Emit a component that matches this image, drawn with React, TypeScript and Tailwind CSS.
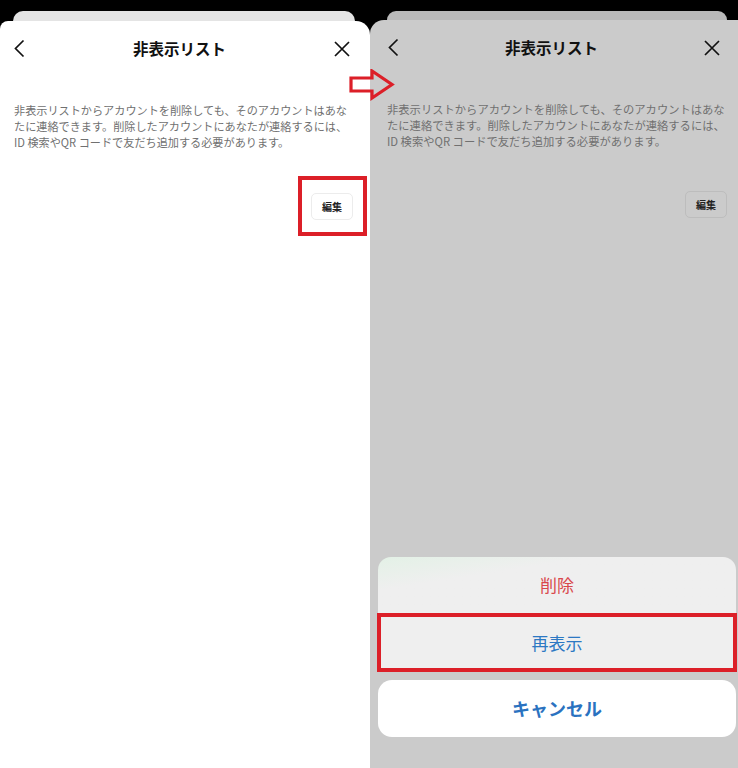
import React from 'react';

// 非表示リスト: 編集ボタン → アクションシート(削除/再表示/キャンセル) の説明用スクリーンショット
const Chevron: React.FC = () => (
    <svg width="12" height="19" viewBox="0 0 12 19">
        <path d="M10.5 1.5 L2.5 9.5 L10.5 17.5" fill="none" stroke="#111" strokeWidth="1.7" />
    </svg>
);

const Close: React.FC = () => (
    <svg width="16" height="16" viewBox="0 0 16 16">
        <path d="M1 1 L15 15 M15 1 L1 15" fill="none" stroke="#111" strokeWidth="1.7" />
    </svg>
);

const Header: React.FC<{ pl: string; pr: string }> = ({ pl, pr }) => (
    <div className={`h-[55px] flex items-center justify-between ${pl} ${pr}`}>
        <Chevron />
        <h1 className="text-[15.5px] font-bold text-[#111]">非表示リスト</h1>
        <Close />
    </div>
);

const Description: React.FC<{ pl: string; size: string }> = ({ pl, size }) => (
    <div className={`pt-[26px] ${pl} ${size} leading-[16px] text-[#707070] whitespace-nowrap`}>
        <p>非表示リストからアカウントを削除しても、そのアカウントはあな</p>
        <p>たに連絡できます。削除したアカウントにあなたが連絡するには、</p>
        <p>ID 検索やQR コードで友だち追加する必要があります。</p>
    </div>
);

const EditButton: React.FC<{ dim?: boolean }> = ({ dim }) => (
    <button
        className={`w-[42px] h-[27px] rounded-[5px] border text-[10px] font-bold text-[#222] ${dim ? 'border-[#bdbdbd] bg-[#cbcbcb]' : 'border-[#ececec] bg-white'}`}
    >
        編集
    </button>
);

const App: React.FC = () => {
    return (
        <div
            className="relative w-[738px] h-[768px] flex bg-black overflow-hidden"
            style={{ fontFamily: '"Noto Sans CJK JP", "Noto Sans", sans-serif' }}
        >
            {/* 左: 非表示リスト */}
            <div className="w-[370px] flex flex-col">
                <div className="h-[11px]" />
                <div className="ml-[13px] mr-[15px] h-[10px] rounded-t-[10px] bg-[#e4e4e4]" />
                <div className="flex-1 bg-white rounded-tr-[14px] rounded-tl-[8px]">
                    <Header pl="pl-[13px]" pr="pr-[20px]" />
                    <Description pl="pl-[14px]" size="text-[11.15px]" />
                    <div className="flex justify-end pr-[3px] mt-[26px]">
                        <div className="border-4 border-[#dc1f28] pl-[9px] pr-[10px] py-[12px]">
                            <EditButton />
                        </div>
                    </div>
                </div>
            </div>

            {/* 右: アクションシート表示中 */}
            <div className="relative flex-1 flex flex-col">
                <div className="h-[11px]" />
                <div className="ml-[17px] mr-[11px] h-[9px] rounded-t-[10px] bg-[#b9b9b9]" />
                <div className="flex-1 bg-[#cbcbcb] rounded-tl-[14px]">
                    <Header pl="pl-[17px]" pr="pr-[18px]" />
                    <Description pl="pl-[17px]" size="text-[11.3px]" />
                    <div className="flex justify-end pr-[11px] mt-[42px]">
                        <EditButton dim />
                    </div>
                </div>

                <div className="absolute left-[8px] right-[2px] bottom-[31px] flex flex-col gap-[8px]">
                    <div>
                        <div className="h-[56px] rounded-t-[13px] bg-linear-to-br from-[#e3f1e6] via-[#efefef] via-30% to-[#efefef] flex items-center justify-center text-[17px] text-[#d9474b]">
                            削除
                        </div>
                        <div className="-ml-[1px] -mr-[1px] h-[59px] border-4 border-[#dc1f28] bg-[#efefef] flex items-center justify-center text-[17px] text-[#2c78c3]">
                            再表示
                        </div>
                    </div>
                    <button className="h-[57px] rounded-[14px] bg-white text-[18px] font-bold text-[#2a72c0]">
                        キャンセル
                    </button>
                </div>
            </div>

            {/* 矢印 */}
            <svg className="absolute left-[349px] top-[69px]" width="46" height="32" viewBox="0 0 46 32">
                <polygon
                    points="2,9 23,9 23,2 43,15.5 23,29 23,22 2,22"
                    fill="none"
                    stroke="#dc1f28"
                    strokeWidth="3.2"
                    strokeLinejoin="miter"
                />
            </svg>
        </div>
    );
};

export default App;
